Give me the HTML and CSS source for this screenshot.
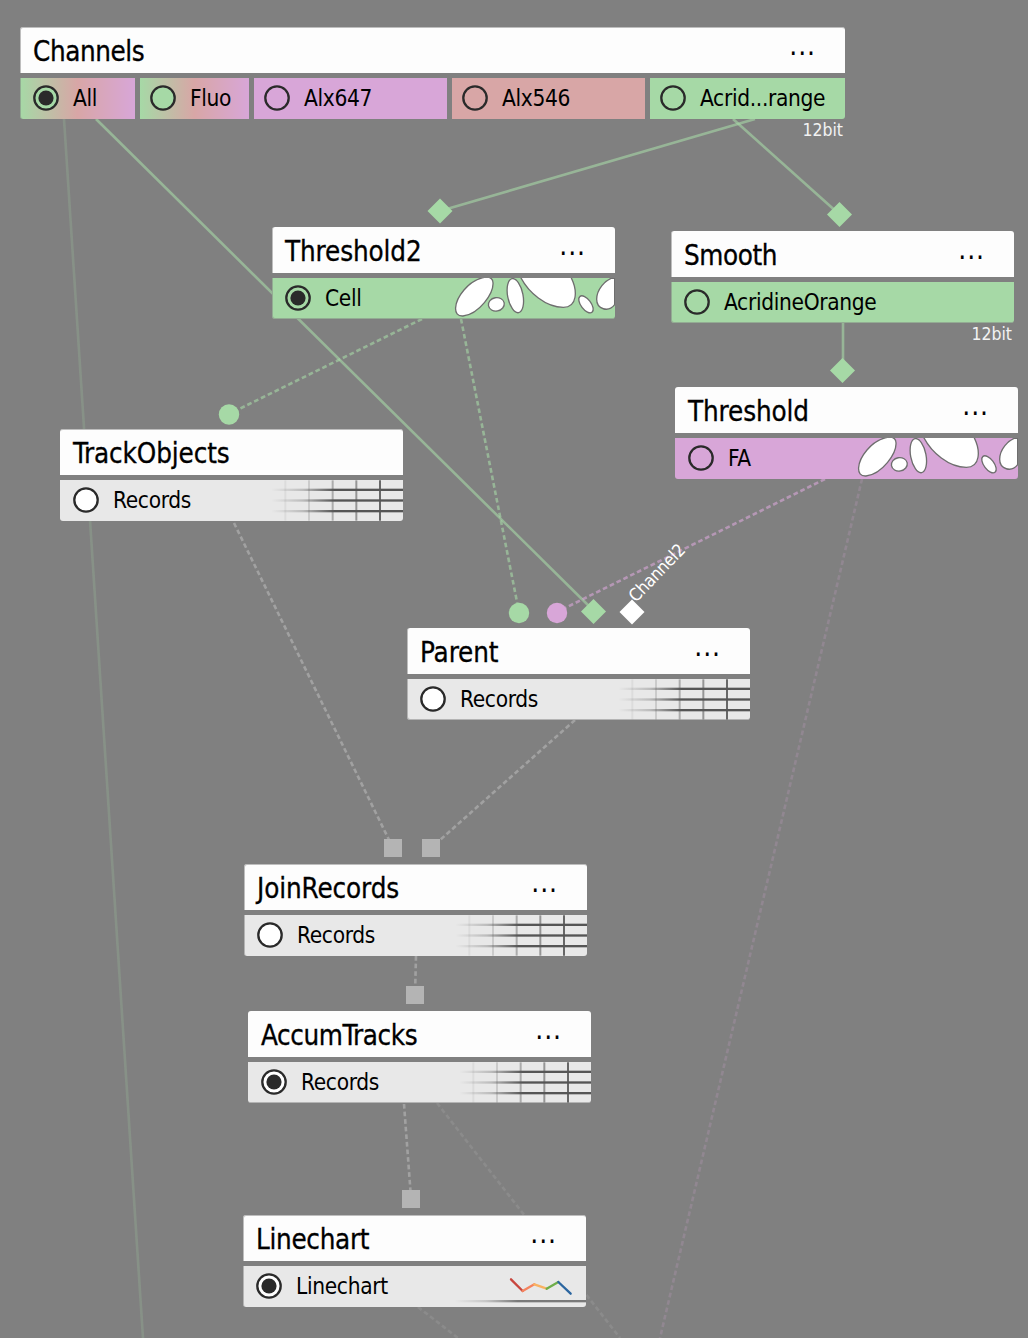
FILE: index.html
```html
<!DOCTYPE html>
<html lang="en">
<head>
<meta charset="utf-8">
<title>Analysis graph</title>
<link rel="stylesheet" href="styles.css">
</head>
<body>
<svg class="defs" width="0" height="0" aria-hidden="true">
  <defs>
    <linearGradient id="fade" gradientUnits="userSpaceOnUse" x1="25" y1="0" x2="215" y2="0">
      <stop offset="0" stop-color="#555" stop-opacity="0"/>
      <stop offset=".5" stop-color="#555" stop-opacity=".3"/>
      <stop offset="1" stop-color="#555"/>
    </linearGradient>
    <symbol id="radio" viewBox="0 0 26 26">
      <circle cx="13" cy="13" r="11.7" stroke="#2a2a2a" stroke-width="2.3"/>
    </symbol>
    <symbol id="radio-on" viewBox="0 0 26 26">
      <circle cx="13" cy="13" r="11.7" stroke="#2a2a2a" stroke-width="2.3"/>
      <circle cx="13" cy="13" r="7.6" fill="#2a2a2a"/>
    </symbol>
    <symbol id="cells" viewBox="579 264 486 123">
      <g fill="#fff" stroke="#6e6e6e" stroke-width="4">
        <path d="M699 278C701 310 658 372 609 378C576 380 582 335 612 300C642 264 698 246 699 278Z"/>
        <ellipse cx="709" cy="343" rx="24" ry="20" transform="rotate(-10 709 343)"/>
        <ellipse cx="766" cy="317" rx="23" ry="52" transform="rotate(-11 766 317)"/>
        <path d="M781 260C805 308 858 352 910 352C952 352 954 302 932 260Z"/>
        <ellipse cx="978" cy="343" rx="15" ry="30" transform="rotate(-37 978 343)"/>
        <path d="M1064 262C1034 268 1010 300 1010 328C1010 358 1045 368 1064 344Z"/>
      </g>
    </symbol>
    <symbol id="grid" viewBox="0 0 420 121">
      <g stroke="#222" stroke-width="6">
        <path d="M67 0V121" opacity=".06"/>
        <path d="M138 0V121" opacity=".14"/>
        <path d="M209 0V121" opacity=".3"/>
        <path d="M280 0V121" opacity=".42"/>
        <path d="M351 0V121" opacity=".65"/>
      </g>
      <g fill="url(#fade)">
        <rect x="20" y="25" width="400" height="7"/>
        <rect x="20" y="57" width="400" height="7"/>
        <rect x="20" y="89" width="400" height="7"/>
      </g>
    </symbol>
    <symbol id="chart" viewBox="0 0 420 123">
      <rect x="20" y="102" width="400" height="7" fill="url(#fade)" opacity=".75"/>
      <g fill="none" stroke-width="7" stroke-linecap="round">
        <path d="M195 40L230 75" stroke="#c8463e"/>
        <path d="M230 75L265 55" stroke="#f4845f"/>
        <path d="M265 55L302 68" stroke="#f9b262"/>
        <path d="M302 68L337 48" stroke="#6fae4a"/>
        <path d="M337 48L374 83" stroke="#2c66a0"/>
      </g>
    </symbol>
  </defs>
</svg>
<main class="canvas">
  <svg class="edges" width="1028" height="1338" viewBox="0 0 1028 1338">
    <g class="edge green">
      <path class="faint" d="M64 119L143 1338"/>
      <path d="M96 119L594 611"/>
      <path d="M755 119L440 211"/>
      <path d="M733 119L839 214"/>
      <path d="M843 323V370"/>
      <path class="dash" d="M422 319L229 414"/>
      <path class="dash" d="M461 319L519 612"/>
    </g>
    <g class="edge pink">
      <path class="dash" d="M825 479L557 612"/>
      <path class="dash faint" d="M862 479L660 1338"/>
    </g>
    <g class="edge gray">
      <path class="dash" d="M234 523L393 848"/>
      <path class="dash" d="M575 720L431 848"/>
      <path class="dash" d="M416 956L415 995"/>
      <path class="dash" d="M404 1104L411 1198"/>
      <path class="dash faint" d="M437 1103L620 1338"/>
      <path class="dash faint" d="M418 1307L458 1338"/>
    </g>
    <g class="ports">
      <path class="p-green" d="M440 198.500L452.500 211L440 223.500L427.500 211Z"/>
      <path class="p-green" d="M839.500 202L852 214.500L839.500 227L827 214.500Z"/>
      <path class="p-green" d="M842.500 358L855 370.500L842.500 383L830 370.500Z"/>
      <path class="p-green" d="M593.500 599L606 611.500L593.500 624L581 611.500Z"/>
      <path class="p-white" d="M632 599.500L644.500 612L632 624.500L619.500 612Z"/>
      <circle class="p-green" cx="229" cy="414.500" r="10.200"/>
      <circle class="p-green" cx="519" cy="613" r="10.200"/>
      <circle class="p-pink" cx="557" cy="613" r="10.200"/>
      <rect class="p-gray" x="384" y="839" width="18" height="18"/>
      <rect class="p-gray" x="422" y="839" width="18" height="18"/>
      <rect class="p-gray" x="406" y="986" width="18" height="18"/>
      <rect class="p-gray" x="402" y="1190" width="18" height="18"/>
    </g>
  </svg>

  <section class="node channels soft-left soft-top">
    <header class="head"><h2>Channels</h2><span class="more">...</span></header>
    <div class="outputs">
      <div class="row mix on-green"><svg class="radio"><use href="#radio-on"/></svg><span>All</span></div>
      <div class="row mix on-green"><svg class="radio"><use href="#radio"/></svg><span>Fluo</span></div>
      <div class="row pink"><svg class="radio"><use href="#radio"/></svg><span>Alx647</span></div>
      <div class="row red"><svg class="radio"><use href="#radio"/></svg><span>Alx546</span></div>
      <div class="row green"><svg class="radio"><use href="#radio"/></svg><span>Acrid...range</span></div>
    </div>
    <small class="depth">12bit</small>
  </section>

  <section class="node threshold2 soft-left soft-bottom">
    <header class="head"><h2>Threshold2</h2><span class="more">...</span></header>
    <div class="row green"><svg class="radio"><use href="#radio-on"/></svg><span>Cell</span><svg class="deco cells"><use href="#cells"/></svg></div>
  </section>

  <section class="node smooth soft-left soft-bottom">
    <header class="head"><h2>Smooth</h2><span class="more">...</span></header>
    <div class="row green"><svg class="radio"><use href="#radio"/></svg><span>AcridineOrange</span></div>
    <small class="depth">12bit</small>
  </section>

  <section class="node threshold">
    <header class="head"><h2>Threshold</h2><span class="more">...</span></header>
    <div class="row pink"><svg class="radio"><use href="#radio"/></svg><span>FA</span><svg class="deco cells"><use href="#cells"/></svg></div>
  </section>

  <section class="node track soft-top">
    <header class="head"><h2>TrackObjects</h2></header>
    <div class="row plain"><svg class="radio"><use href="#radio"/></svg><span>Records</span><svg class="deco"><use href="#grid"/></svg></div>
  </section>

  <span class="port-label">Channel2</span>
  <section class="node parent soft-left soft-bottom">
    <header class="head"><h2>Parent</h2><span class="more">...</span></header>
    <div class="row plain"><svg class="radio"><use href="#radio"/></svg><span>Records</span><svg class="deco"><use href="#grid"/></svg></div>
  </section>

  <section class="node join soft-left soft-top">
    <header class="head"><h2>JoinRecords</h2><span class="more">...</span></header>
    <div class="row plain"><svg class="radio"><use href="#radio"/></svg><span>Records</span><svg class="deco"><use href="#grid"/></svg></div>
  </section>

  <section class="node accum soft-bottom">
    <header class="head"><h2>AccumTracks</h2><span class="more">...</span></header>
    <div class="row plain"><svg class="radio"><use href="#radio-on"/></svg><span>Records</span><svg class="deco"><use href="#grid"/></svg></div>
  </section>

  <section class="node linechart soft-left soft-top">
    <header class="head"><h2>Linechart</h2><span class="more">...</span></header>
    <div class="row plain"><svg class="radio"><use href="#radio-on"/></svg><span>Linechart</span><svg class="deco"><use href="#chart"/></svg></div>
  </section>
</main>
</body>
</html>
```
FILE: styles.css
```css
* { box-sizing: border-box; }

body {
  margin: 0;
  background: #808080;
  font-family: "DejaVu Sans Condensed", "DejaVu Sans", sans-serif;
  font-stretch: condensed;
  color: #000;
}

.defs { position: absolute; }

.canvas {
  position: relative;
  width: 1028px;
  height: 1338px;
  overflow: hidden;
}

.edges { display: block; }
.edge { fill: none; stroke-width: 2.6; }
.edge path { opacity: .6; }
.edge .dash { stroke-dasharray: 4.700 2.900; }
.edge .faint { opacity: .2; }
.edge.green { stroke: #a6d9a6; }
.edge.pink { stroke: #d8a6d8; }
.edge.gray { stroke: #b8b8b8; }
.p-green { fill: #a6d9a6; }
.p-pink { fill: #d8a6d8; }
.p-gray { fill: #b4b4b4; }
.p-white { fill: #fff; }

/* Nodes sit freely on the graph canvas */
.node {
  position: absolute;
  display: flex;
  flex-direction: column;
  gap: 5px;
  width: 343px;
  height: 92px;
  background: #808080;
  border-radius: 3px;
}
.channels { left: 20px; top: 27px; width: 825px; }
.threshold2 { left: 272px; top: 227px; }
.smooth { left: 671px; top: 231px; }
.threshold { left: 675px; top: 387px; }
.track { left: 60px; top: 429px; }
.parent { left: 407px; top: 628px; }
.join { left: 244px; top: 864px; }
.accum { left: 248px; top: 1011px; }
.linechart { left: 243px; top: 1215px; }

/* Muted hairlines on the node outline */
.node::after {
  content: "";
  position: absolute;
  inset: 0;
  border: 0 solid rgba(128, 128, 128, .5);
  border-radius: 3px;
  pointer-events: none;
}
.soft-left::after { border-left-width: 1px; }
.soft-top::after { border-top-width: 1px; }
.soft-bottom::after { border-bottom-width: 1px; }

.head {
  display: flex;
  align-items: center;
  justify-content: space-between;
  height: 46px;
  padding: 4px 29px 0 13px;
  background: #fdfdfd;
  border-radius: 3px 3px 0 0;
}
.head h2 {
  margin: 0;
  font-size: 27.500px;
  font-weight: 400;
  line-height: 1;
  letter-spacing: -.1px;
  -webkit-text-stroke: .3px #000;
}
.channels h2, .smooth h2, .accum h2 { letter-spacing: -.4px; }
.linechart h2 { letter-spacing: -.3px; }
.more {
  font-size: 28px;
  line-height: 1;
  letter-spacing: .9px;
  padding-bottom: 12px;
}

.outputs {
  display: grid;
  grid-template-columns: 115px 109px 193px 193px 195px;
  gap: 5px;
}
.row {
  display: flex;
  align-items: center;
  height: 41px;
  padding: 0 0 1px 13px;
  overflow: hidden;
  font-size: 22.500px;
  letter-spacing: -.33px;
  white-space: nowrap;
  border-radius: 0 0 3px 3px;
}
.outputs .row { padding-left: 10px; border-radius: 0; }
.outputs .row:first-child { padding-left: 13px; border-bottom-left-radius: 3px; }
.outputs .row:last-child { border-bottom-right-radius: 3px; }
.radio {
  flex: none;
  width: 26px;
  height: 26px;
  margin-right: 14px;
  fill: none;
}
.green { background: #a6d9a6; }
.pink { background: #d8a6d8; }
.red { background: #d8a6a6; }
.plain { background: #e8e8e8; }
.mix { background: linear-gradient(90deg, #a6d9a6, #d8a6a6 50%, #d8a6d8); }
.on-green .radio { fill: #a6d9a6; }
.plain .radio { fill: #fff; }

.deco { width: 140px; height: 41px; margin: 0 0 -1px auto; }
.deco.cells { width: 162px; }

.depth {
  position: absolute;
  right: 2px;
  top: 93px;
  color: #f2f2f2;
  font-size: 17.500px;
  line-height: 20px;
  letter-spacing: 0;
}
.port-label {
  position: absolute;
  left: 636px;
  top: 587px;
  color: #fff;
  font-size: 17.500px;
  line-height: 20px;
  letter-spacing: -.3px;
  transform: rotate(-46deg);
  transform-origin: 0 16px;
}
```
